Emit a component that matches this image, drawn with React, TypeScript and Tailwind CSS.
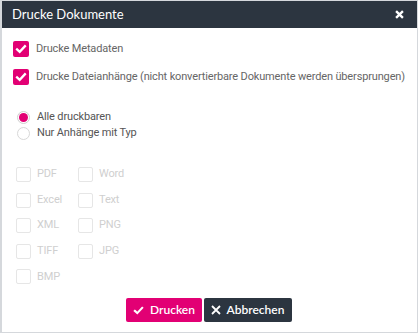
import React from "react";

const Check = ({ className = "" }: { className?: string }) => (
  <svg viewBox="0 0 16 16" className={className} fill="none" stroke="currentColor" strokeWidth="2.6" strokeLinecap="square">
    <path d="M3.5 8.5 L6.5 11.2 L12.5 4.8" />
  </svg>
);

const Box = ({ label }: { label: string }) => (
  <div className="flex items-center gap-[6px] h-[15px]">
    <span className="w-[15px] h-[15px] border border-[#e6e6e6] rounded-[2px] bg-white" />
    <span className="text-[#cfcfcf]">{label}</span>
  </div>
);

export default function App() {
  const types = ["PDF", "Word", "Excel", "Text", "XML", "PNG", "TIFF", "JPG", "BMP"];
  return (
    <div className="w-[418px] h-[334px] bg-white" style={{ fontFamily: "Roboto, 'Noto Sans', sans-serif" }}>
      <div className="w-[418px] h-[333px] border-l-2 border-r border-b border-t border-[#d5d8dc] flex flex-col">
        <div className="h-[27px] bg-[#2c3540] flex items-center justify-between pl-[10px] pr-[13px] shrink-0">
          <span className="text-white text-[13px]" style={{ fontFamily: "Lato, sans-serif" }}>Drucke Dokumente</span>
          <svg viewBox="0 0 10 10" className="w-[9px] h-[9px] text-white" stroke="currentColor" strokeWidth="2.6" strokeLinecap="butt">
            <path d="M1.2 1.2 L8.8 8.8 M8.8 1.2 L1.2 8.8" />
          </svg>
        </div>
        <div className="flex-1 flex flex-col pl-[11px] text-[11px] tracking-[-0.15px] text-[#666]">
          <div className="flex items-center gap-[7px] mt-[13px] h-[16px]">
            <span className="w-[16px] h-[16px] rounded-[2px] bg-[#e20074] flex items-center justify-center text-white shrink-0">
              <Check className="w-[14px] h-[14px]" />
            </span>
            <span className="whitespace-nowrap">Drucke Metadaten</span>
          </div>
          <div className="flex items-center gap-[7px] mt-[12px] h-[16px]">
            <span className="w-[16px] h-[16px] rounded-[2px] bg-[#e20074] flex items-center justify-center text-white shrink-0">
              <Check className="w-[14px] h-[14px]" />
            </span>
            <span className="whitespace-nowrap">Drucke Dateianhänge (nicht konvertierbare Dokumente werden übersprungen)</span>
          </div>
          <div className="flex flex-col gap-[3px] mt-[26px] pl-[4px]">
            <div className="flex items-center gap-[7px] h-[13px]">
              <span className="w-[13px] h-[13px] rounded-full border border-[#cfcfcf] flex items-center justify-center">
                <span className="w-[9px] h-[9px] rounded-full bg-[#e20074]" />
              </span>
              <span className="text-[#555]">Alle druckbaren</span>
            </div>
            <div className="flex items-center gap-[7px] h-[13px]">
              <span className="w-[13px] h-[13px] rounded-full border border-[#d8d8d8]" />
              <span className="text-[#555]">Nur Anhänge mit Typ</span>
            </div>
          </div>
          <div className="grid grid-cols-[62px_62px] gap-y-[10.6px] mt-[27px] pl-[3px]">
            {types.map((t) => (
              <Box key={t} label={t} />
            ))}
          </div>
          <div className="flex justify-center gap-[2px] mt-[14px] pr-[13px]">
            <button className="h-[24px] w-[76px] bg-[#e20074] text-white rounded-[2px] flex items-center justify-center gap-[5px] text-[12px] font-semibold tracking-normal" style={{ fontFamily: "Lato, sans-serif" }}>
              <Check className="w-[13px] h-[13px]" />
              Drucken
            </button>
            <button className="h-[24px] w-[88px] bg-[#2c3540] text-white rounded-[2px] flex items-center justify-center gap-[6px] text-[12px] font-semibold tracking-normal" style={{ fontFamily: "Lato, sans-serif" }}>
              <svg viewBox="0 0 10 10" className="w-[10px] h-[10px]" stroke="currentColor" strokeWidth="1.8">
                <path d="M1 1 L9 9 M9 1 L1 9" />
              </svg>
              Abbrechen
            </button>
          </div>
        </div>
      </div>
    </div>
  );
}
